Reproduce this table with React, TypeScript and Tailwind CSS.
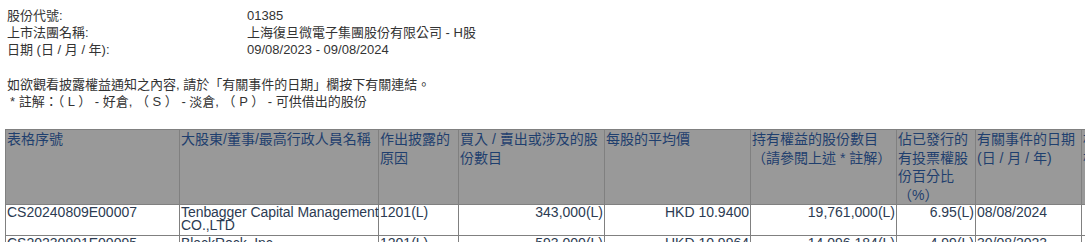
import React from 'react';

const font = "font-['Liberation_Sans','Noto_Sans_CJK_TC',sans-serif]";

const info = [
  { label: '股份代號:', value: '01385' },
  { label: '上市法團名稱:', value: '上海復旦微電子集團股份有限公司 - H股' },
  { label: '日期 (日 / 月 / 年):', value: '09/08/2023 - 09/08/2024' },
];

const headers: React.ReactNode[] = [
  '表格序號',
  '大股東/董事/最高行政人員名稱',
  <>作出披露的<br />原因</>,
  <>買入 / 賣出或涉及的股<br />份數目</>,
  '每股的平均價',
  <>持有權益的股份數目<br />（請參閱上述 * 註解）</>,
  <>佔已發行的<br />有投票權股<br />份百分比<br />（%）</>,
  <>有關事件的日期<br />(日 / 月 / 年)</>,
  <>相關法團<br />權益</>,
];

const rows = [
  ['CS20240809E00007', 'Tenbagger Capital Management\nCO.,LTD', '1201(L)', '343,000(L)', 'HKD 10.9400', '19,761,000(L)', '6.95(L)', '08/08/2024', ''],
  ['CS20230901E00095', 'BlackRock, Inc.', '1201(L)', '593,000(L)', 'HKD 10.9964', '14,096,184(L)', '4.99(L)', '30/08/2023', ''],
];

// numeric columns sit on the right edge of the cell
const rightAligned = [3, 4, 5, 6];

export default function App() {
  return (
    <div className={`w-[1085px] h-[242px] overflow-hidden bg-white px-[5px] pt-[7px] ${font}`}>
      <div className="grid grid-cols-[242px_1fr] text-[13px] leading-[17px] text-[#333333]">
        {info.map((item) => (
          <React.Fragment key={item.label}>
            <div className="pl-[2px]">{item.label}</div>
            <div>{item.value}</div>
          </React.Fragment>
        ))}
      </div>

      <div className="mt-[18px] pl-[2px] text-[13px] leading-[17px] text-[#333333]">
        <p>如欲觀看披露權益通知之內容, 請於「有關事件的日期」欄按下有關連結。</p>
        <p className="pl-[3px]">* 註解：（ L ） - 好倉, （ S ） - 淡倉, （ P ） - 可供借出的股份</p>
      </div>

      <div className="mt-[19px] inline-grid grid-cols-[173px_198px_79px_145px_145px_145px_78px_105px_120px] gap-px border border-[#808080] bg-[#808080] text-[14px]">
        {headers.map((h, i) => (
          <div
            key={i}
            className="h-[74px] bg-[#999999] px-px leading-[18.5px] whitespace-nowrap overflow-hidden text-[#1f3f6e]"
          >
            {h}
          </div>
        ))}
        {rows.map((row, r) =>
          row.map((cell, c) => (
            <div
              key={`${r}-${c}`}
              className={`h-[30px] bg-white pt-px leading-[13px] whitespace-pre text-[#2c3b52] ${
                c === 1 ? 'pl-px tracking-[-0.06px]' : 'px-px'
              } ${rightAligned.includes(c) ? 'text-right' : ''}`}
            >
              {cell}
            </div>
          ))
        )}
      </div>
    </div>
  );
}
